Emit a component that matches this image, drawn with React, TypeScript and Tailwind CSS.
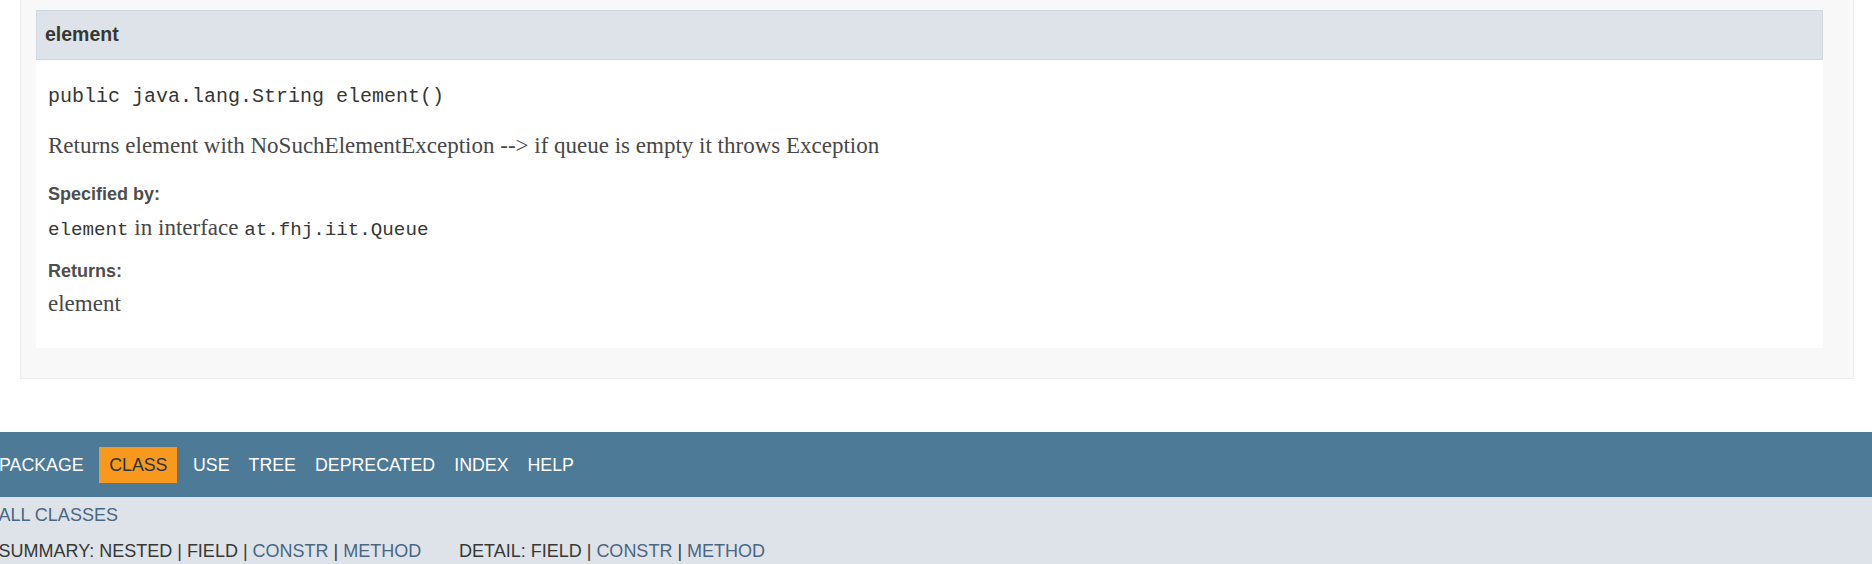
import React from "react";

const sans = { fontFamily: '"Liberation Sans", Arial, sans-serif' };

export default function App() {
  return (
    <div className="w-[1872px] h-[564px] overflow-hidden bg-white font-['Liberation_Sans',Arial,sans-serif]">
      {/* method detail block */}
      <div className="ml-[20px] w-[1834px] border border-t-0 border-[#ededed] bg-[#f8f8f8] pl-[15px] pr-[30px] pt-[10px] pb-[30px]">
        <div className="bg-white pb-[29px]">
          <h4 className="h-[50px] border border-[#d0d9e0] bg-[#dee3e9] pl-[8px] flex items-center text-[19.5px] font-bold text-[#353833]">
            element
          </h4>
          <div className="pl-[12px]">
            <div className="mt-[22px] h-[30px] leading-[30px] font-['Liberation_Mono',monospace] text-[20px] text-[#353833] whitespace-pre">
              public java.lang.String element()
            </div>
            <div className="mt-[19px] h-[30px] leading-[30px] font-['Liberation_Serif',serif] text-[23px] text-[#474747]">
              Returns element with NoSuchElementException --&gt; if queue is empty it throws Exception
            </div>
            <div className="mt-[21px] h-[24px] leading-[24px] text-[18px] font-bold text-[#4e4e4e]">
              Specified by:
            </div>
            <div className="mt-[7px] h-[30px] leading-[30px] font-['Liberation_Serif',serif] text-[23px] text-[#474747] whitespace-pre">
              <code className="font-['Liberation_Mono',monospace] text-[19.2px] text-[#353833]">element</code> in interface <code className="font-['Liberation_Mono',monospace] text-[19.2px] text-[#353833]">at.fhj.iit.Queue</code>
            </div>
            <div className="mt-[16px] h-[24px] leading-[24px] text-[18px] font-bold text-[#4e4e4e]">
              Returns:
            </div>
            <div className="mt-[6px] h-[30px] leading-[30px] font-['Liberation_Serif',serif] text-[23px] text-[#474747]">
              element
            </div>
          </div>
        </div>
      </div>

      {/* bottom navigation */}
      <div className="mt-[53px] h-[65px] bg-[#4d7a97] flex items-center text-[17.8px] text-white" style={sans}>
        <div className="ml-[-10.5px] px-[9.5px] h-[36px] leading-[36px]">PACKAGE</div>
        <div className="mx-[6px] px-[10px] h-[36px] leading-[36px] bg-[#f8981d] text-[#253441]">CLASS</div>
        <div className="px-[9.5px] h-[36px] leading-[36px]">USE</div>
        <div className="px-[9.5px] h-[36px] leading-[36px]">TREE</div>
        <div className="px-[9.5px] h-[36px] leading-[36px]">DEPRECATED</div>
        <div className="px-[9.5px] h-[36px] leading-[36px]">INDEX</div>
        <div className="px-[9.5px] h-[36px] leading-[36px]">HELP</div>
      </div>
      <div className="h-[80px] bg-[#dee3e9] pt-[3px] text-[18px]" style={sans}>
        <div className="ml-[-1.5px] h-[30px] leading-[30px] text-[#4a6782]">ALL CLASSES</div>
        <div className="ml-[-1.5px] mt-[6px] h-[30px] leading-[30px] flex whitespace-pre text-[#353833]">
          <div className="w-[460.5px]">
            SUMMARY: NESTED | FIELD | <span className="text-[#4a6782]">CONSTR</span> | <span className="text-[#4a6782]">METHOD</span>
          </div>
          <div>
            DETAIL: FIELD | <span className="text-[#4a6782]">CONSTR</span> | <span className="text-[#4a6782]">METHOD</span>
          </div>
        </div>
      </div>
    </div>
  );
}
